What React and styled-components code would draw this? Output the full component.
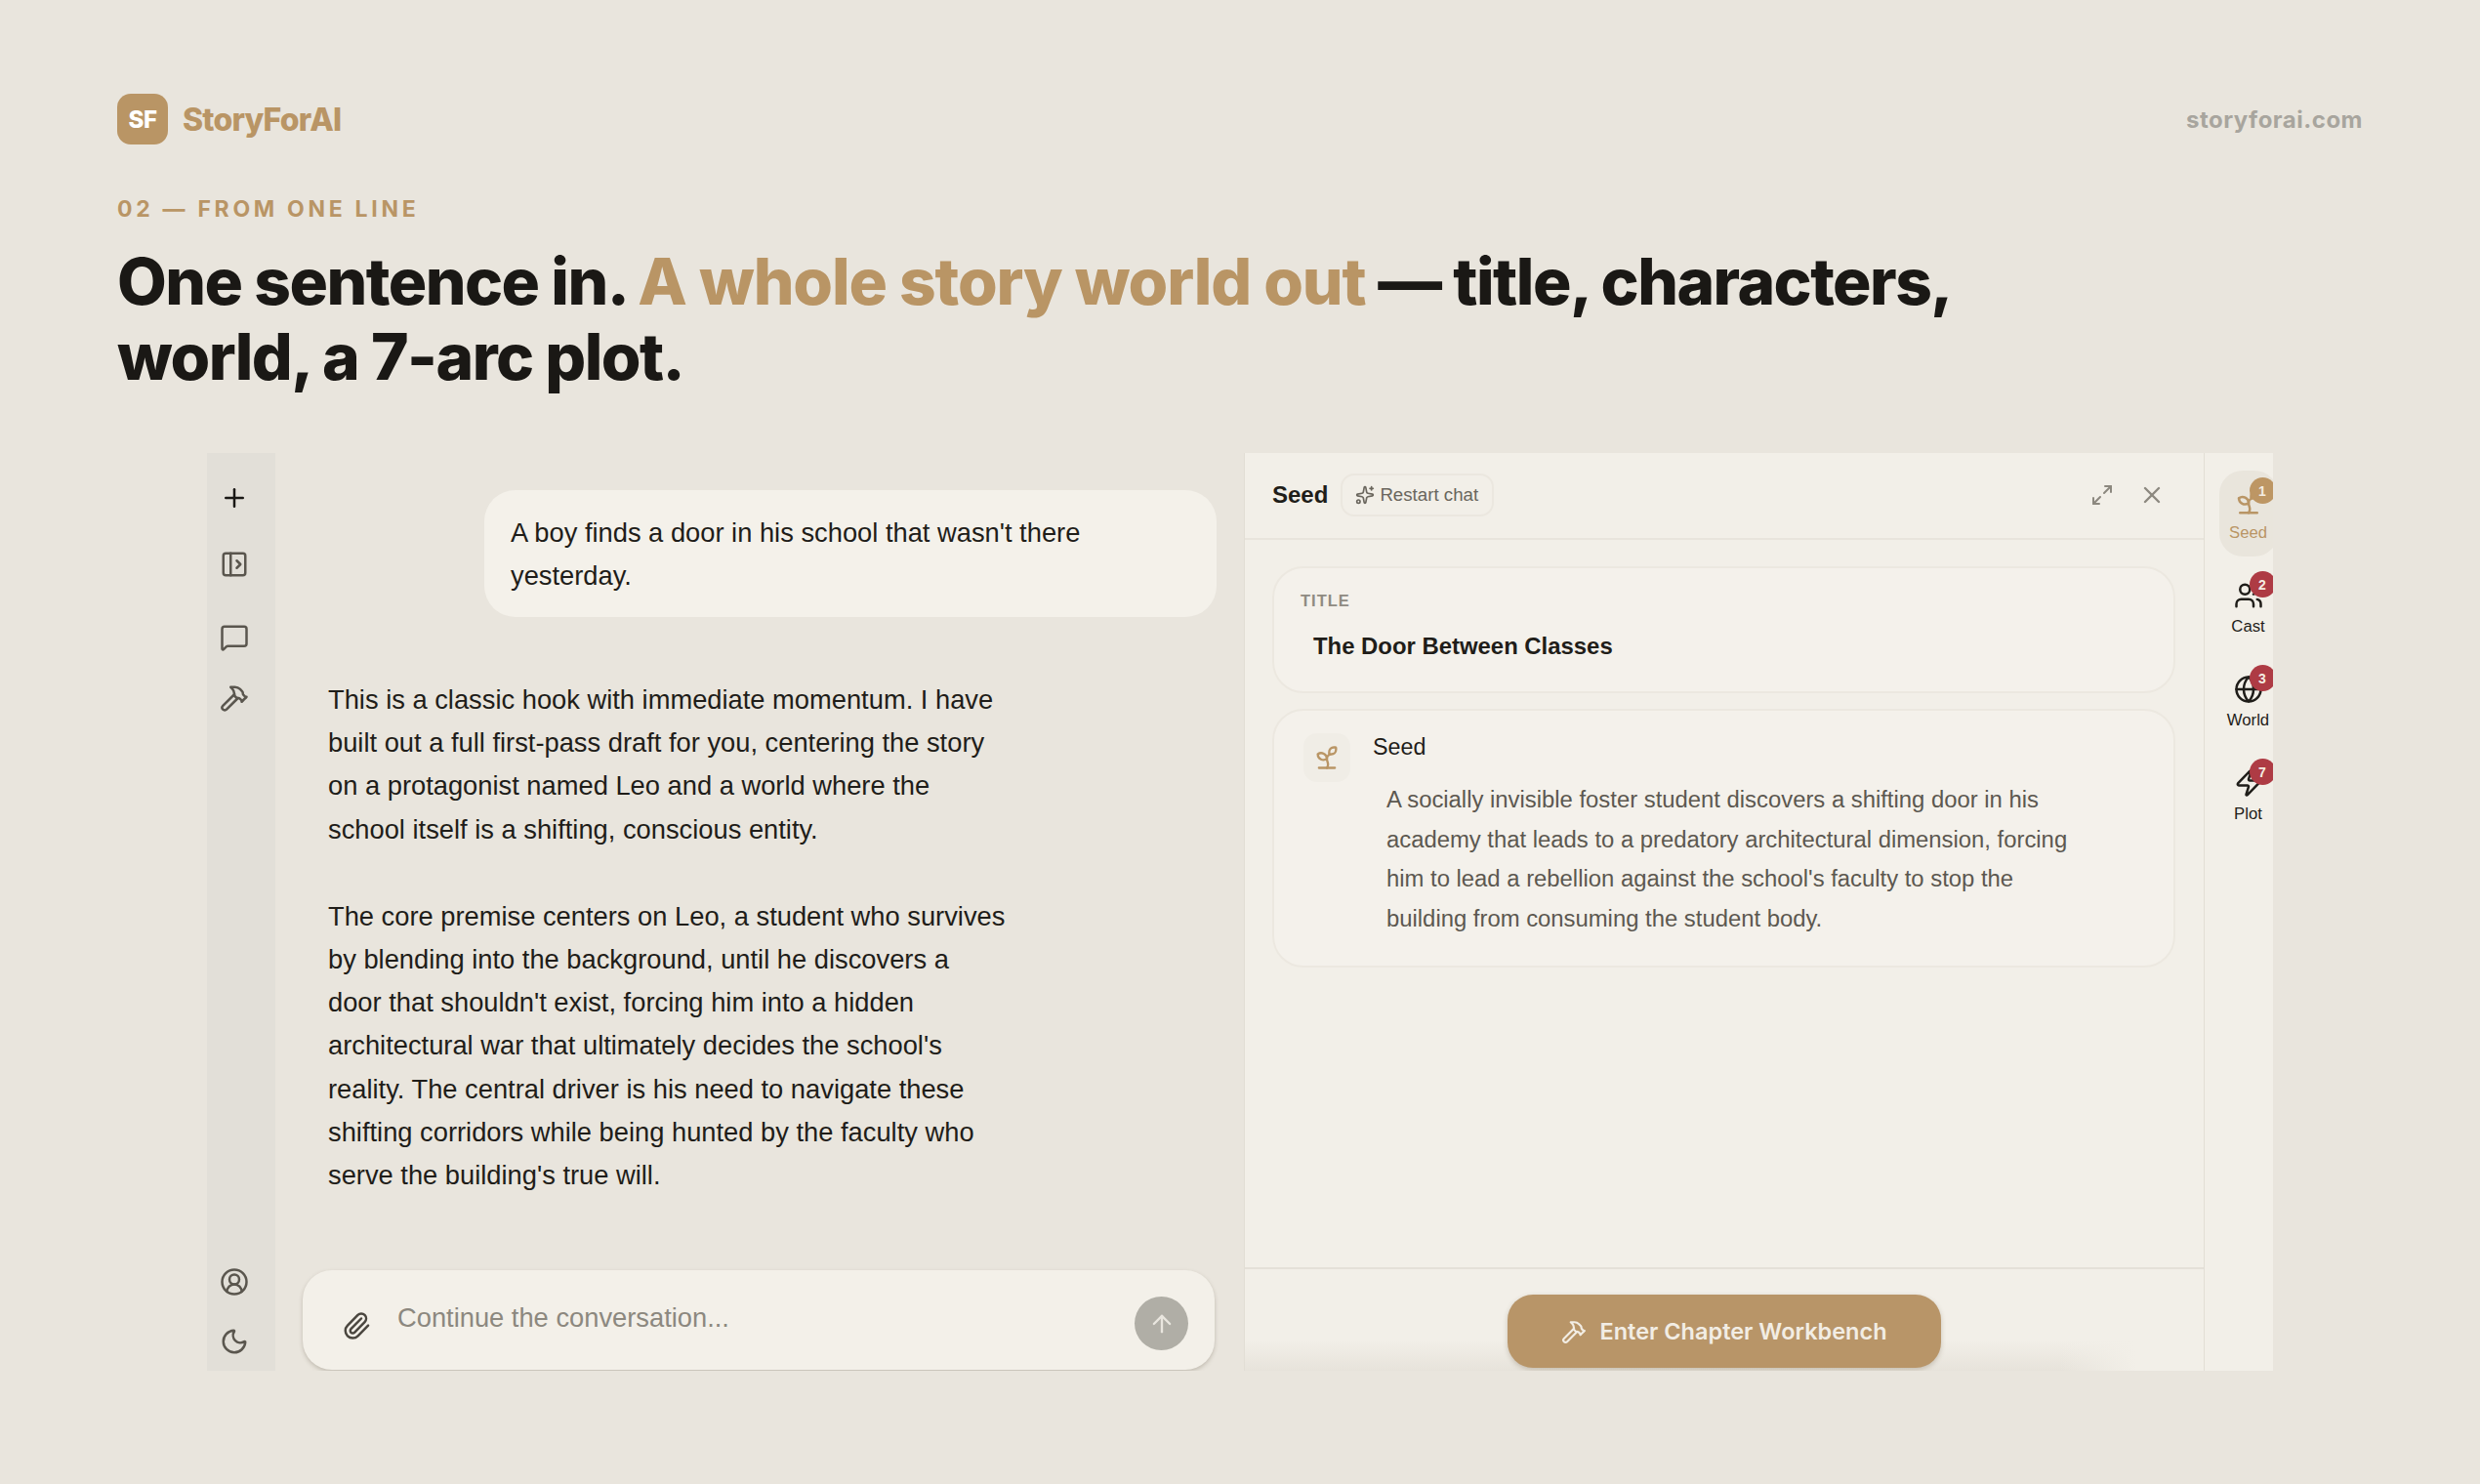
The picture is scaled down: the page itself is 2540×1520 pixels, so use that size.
import React from "react";
import styled, { createGlobalStyle } from "styled-components";
import { Plus, PanelLeftOpen, MessageSquare, Hammer, CircleUserRound, Moon, Paperclip, ArrowUp, Sprout, Users, Globe, Zap, Sparkles, Maximize2, X } from "lucide-react";

const Global = createGlobalStyle`
  html, body { margin: 0; padding: 0; background: #e9e5dd; }
  * { box-sizing: border-box; }
`;
const Page = styled.div`
  width: 2540px; height: 1520px; overflow: hidden; background: #e9e5dd;
  padding: 96px 120px 0; font-family: "Liberation Sans", Arial, sans-serif;
`;
const TopBar = styled.header`display: flex; justify-content: space-between; align-items: center; height: 52px;`;
const Brand = styled.div`display: flex; align-items: center; gap: 15px;`;
const LogoMark = styled.div`
  width: 52px; height: 52px; border-radius: 14px; background: #b99565; color: #fff;
  display: flex; align-items: center; justify-content: center;
  font: 800 24px Inter, sans-serif; letter-spacing: -0.5px;
`;
const Wordmark = styled.span`font: 800 32px Inter, sans-serif; letter-spacing: -0.8px; color: #b99565;`;
const Domain = styled.span`font: 700 24px Inter, sans-serif; letter-spacing: 0.5px; color: #a8a59e;`;
const Eyebrow = styled.div`
  margin-top: 51px; font: 700 23px/30px Inter, sans-serif; letter-spacing: 3.7px; color: #b99565;
`;
const Heading = styled.h1`
  margin: 21px 0 0; font: 800 65.8px/77px Inter, sans-serif; letter-spacing: -1.55px; color: #1a1815;
  width: 1950px;
`;
const Accent = styled.span`color: #b99565; letter-spacing: -1.15px;`;
const Frame = styled.div`
  margin: 60px 0 0 92px; width: 2116px; height: 940px; display: flex; overflow: hidden; background: #e9e5dd;
`;
const Sidebar = styled.aside`
  flex: 0 0 70px; background: #e2dfd8; padding: 31px 0 15px 13px; display: flex; flex-direction: column; color: #5a564e;
`;
const NavIcon = styled.div`
  width: 30px; height: 30px; margin-top: ${p => p.$top || 0}px; display: flex; color: ${p => p.$strong ? "#1a1815" : "#5a564e"};
`;
const Spacer = styled.div`flex: 1;`;
const Chat = styled.main`flex: 0 0 992px; display: flex; flex-direction: column; padding: 38px 30px 1px 28px;`;
const Bubble = styled.div`
  align-self: flex-end; width: 750px; height: 130px; margin-right: -2px; padding: 22px 27px; border-radius: 32px;
  background: #f4f1ea; font-size: 27.3px; line-height: 44px; color: #1f1d19;
`;
const Answer = styled.div`
  flex: 1; margin: 63px 0 0 26px; max-width: 696px; font-size: 27.3px; line-height: 44.2px; color: #1f1d19;
`;
const Para = styled.p`margin: 0 0 45px;`;
const Composer = styled.div`
  height: 102px; border-radius: 30px; background: #f3f0e9; display: flex; padding: 27px 27px 0 40px;
  box-shadow: 0 2px 4px rgba(90, 80, 60, 0.28);
`;
const Clip = styled.div`color: #4a463f; display: flex; width: 30px; height: 30px; margin-top: 15px;`;
const Placeholder = styled.div`flex: 1; margin: 2px 0 0 27px; font-size: 27.3px; line-height: 40px; color: #8c887f;`;
const Send = styled.div`
  width: 55px; height: 55px; border-radius: 50%; background: #b0aea6; color: #e9e6df;
  display: flex; align-items: center; justify-content: center;
`;
const Panel = styled.section`
  flex: 0 0 983px; background: #f2efe8; border-left: 1px solid #e2ded5; display: flex; flex-direction: column;
`;
const PanelHead = styled.div`
  flex: 0 0 89px; border-bottom: 2px solid #e8e4dc; display: flex; align-items: center; padding: 0 39px 2px 28px;
`;
const PanelTitle = styled.span`font-weight: 700; font-size: 24px; color: #1f1d19;`;
const Restart = styled.div`
  margin-left: 13px; width: 157px; height: 44px; border: 2px solid #ebe7df; border-radius: 14px; display: flex;
  align-items: center; gap: 5px; padding-left: 13px; font-size: 18.7px; color: #6a665d;
`;
const HeadTools = styled.div`margin-left: auto; display: flex; align-items: center; gap: 25px; color: #8c887f;`;
const PanelBody = styled.div`flex: 1; padding: 27px 29px 0 28px; display: flex; flex-direction: column; gap: 16px;`;
const Card = styled.div`
  height: ${p => p.$h}px; border: 2px solid #ece8e0; border-radius: 32px; background: #f4f1eb;
`;
const TitleCard = styled(Card)`padding: 23px 27px;`;
const Label = styled.div`font-weight: 700; font-size: 16.5px; line-height: 20px; letter-spacing: 1px; color: #8f8b82;`;
const TitleText = styled.div`margin: 20px 0 0 13px; font-weight: 700; font-size: 23.9px; line-height: 34px; color: #1f1d19;`;
const SeedCard = styled(Card)`display: flex; padding: 23px 30px;`;
const IconTile = styled.div`
  flex: 0 0 48px; height: 50px; border-radius: 14px; background: #f0ede6; color: #b99565;
  display: flex; align-items: center; justify-content: center;
`;
const SeedCol = styled.div`margin-left: 23px; flex: 1;`;
const SeedName = styled.div`font-size: 23.3px; line-height: 28px; color: #1f1d19;`;
const SeedText = styled.p`margin: 20px 0 0 14px; max-width: 710px; font-size: 23.85px; line-height: 40.6px; color: #5c5850;`;
const PanelFoot = styled.div`
  flex: 0 0 106px; border-top: 2px solid #e4e0d8; display: flex; justify-content: center; padding-top: 26px;
  background: linear-gradient(90deg, rgba(242,239,232,0) 85%, #f2efe8 93%), linear-gradient(180deg, #f2efe8 70%, #e7e3db 100%);
`;
const Workbench = styled.div`
  width: 444px; height: 75px; border-radius: 26px; background: #b89568; color: #f2ede4;
  display: flex; align-items: center; justify-content: center; gap: 13px;
  font: 600 23.5px Inter, sans-serif; box-shadow: 0 2px 5px rgba(90, 70, 40, 0.25);
`;
const Rail = styled.nav`
  flex: 0 0 90px; background: #f2efe8; border-left: 1px solid #e2ded5; padding-top: 18px;
  display: flex; flex-direction: column; align-items: center; gap: 8px;
`;
const RailItem = styled.div`
  position: relative; width: 60px; height: 88px; border-radius: 24px; padding-top: 17px;
  display: flex; flex-direction: column; align-items: center;
  background: ${p => p.$active ? "#e9e5dc" : "transparent"};
  color: ${p => p.$active ? "#b99565" : "#1f1d19"};
`;
const RailLabel = styled.span`margin-top: 5px; font-size: 16.7px; line-height: 24px;`;
const Badge = styled.span`
  position: absolute; top: 7px; right: 2px; width: 27px; height: 27px; border-radius: 50%;
  background: ${p => p.$active ? "#bd9664" : "#ae3b44"}; color: #f4ece2;
  font-weight: 700; font-size: 14px; display: flex; align-items: center; justify-content: center;
`;

const rail = [
  { name: "Seed", n: 1, Icon: Sprout, active: true },
  { name: "Cast", n: 2, Icon: Users },
  { name: "World", n: 3, Icon: Globe },
  { name: "Plot", n: 7, Icon: Zap },
];

export default function App() {
  return (
    <Page>
      <Global />
      <TopBar>
        <Brand><LogoMark>SF</LogoMark><Wordmark>StoryForAI</Wordmark></Brand>
        <Domain>storyforai.com</Domain>
      </TopBar>
      <Eyebrow>02 — FROM ONE LINE</Eyebrow>
      <Heading>One sentence in. <Accent>A whole story world out</Accent> — title, characters,<br />world, a 7-arc plot.</Heading>
      <Frame>
        <Sidebar>
          <NavIcon $strong><Plus size={30} strokeWidth={2} /></NavIcon>
          <NavIcon $top={38}><PanelLeftOpen size={30} strokeWidth={2} /></NavIcon>
          <NavIcon $top={45}><MessageSquare size={30} strokeWidth={2} /></NavIcon>
          <NavIcon $top={32}><Hammer size={30} strokeWidth={2} /></NavIcon>
          <Spacer />
          <NavIcon><CircleUserRound size={30} strokeWidth={2} /></NavIcon>
          <NavIcon $top={31}><Moon size={30} strokeWidth={2} /></NavIcon>
        </Sidebar>
        <Chat>
          <Bubble>A boy finds a door in his school that wasn't there yesterday.</Bubble>
          <Answer>
            <Para>This is a classic hook with immediate momentum. I have built out a full first-pass draft for you, centering the story on a protagonist named Leo and a world where the school itself is a shifting, conscious entity.</Para>
            <Para>The core premise centers on Leo, a student who survives by blending into the background, until he discovers a door that shouldn't exist, forcing him into a hidden architectural war that ultimately decides the school's reality. The central driver is his need to navigate these shifting corridors while being hunted by the faculty who serve the building's true will.</Para>
          </Answer>
          <Composer>
            <Clip><Paperclip size={30} strokeWidth={2} /></Clip>
            <Placeholder>Continue the conversation...</Placeholder>
            <Send><ArrowUp size={28} strokeWidth={2} /></Send>
          </Composer>
        </Chat>
        <Panel>
          <PanelHead>
            <PanelTitle>Seed</PanelTitle>
            <Restart><Sparkles size={20} strokeWidth={2} />Restart chat</Restart>
            <HeadTools><Maximize2 size={24} strokeWidth={2} /><X size={28} strokeWidth={2} /></HeadTools>
          </PanelHead>
          <PanelBody>
            <TitleCard $h={130}>
              <Label>TITLE</Label>
              <TitleText>The Door Between Classes</TitleText>
            </TitleCard>
            <SeedCard $h={265}>
              <IconTile><Sprout size={28} strokeWidth={2} /></IconTile>
              <SeedCol>
                <SeedName>Seed</SeedName>
                <SeedText>A socially invisible foster student discovers a shifting door in his academy that leads to a predatory architectural dimension, forcing him to lead a rebellion against the school's faculty to stop the building from consuming the student body.</SeedText>
              </SeedCol>
            </SeedCard>
          </PanelBody>
          <PanelFoot>
            <Workbench><Hammer size={26} strokeWidth={2} />Enter Chapter Workbench</Workbench>
          </PanelFoot>
        </Panel>
        <Rail>
          {rail.map(({ name, n, Icon, active }) => (
            <RailItem key={name} $active={active}>
              <Icon size={30} strokeWidth={2} />
              <RailLabel>{name}</RailLabel>
              <Badge $active={active}>{n}</Badge>
            </RailItem>
          ))}
        </Rail>
      </Frame>
    </Page>
  );
}
